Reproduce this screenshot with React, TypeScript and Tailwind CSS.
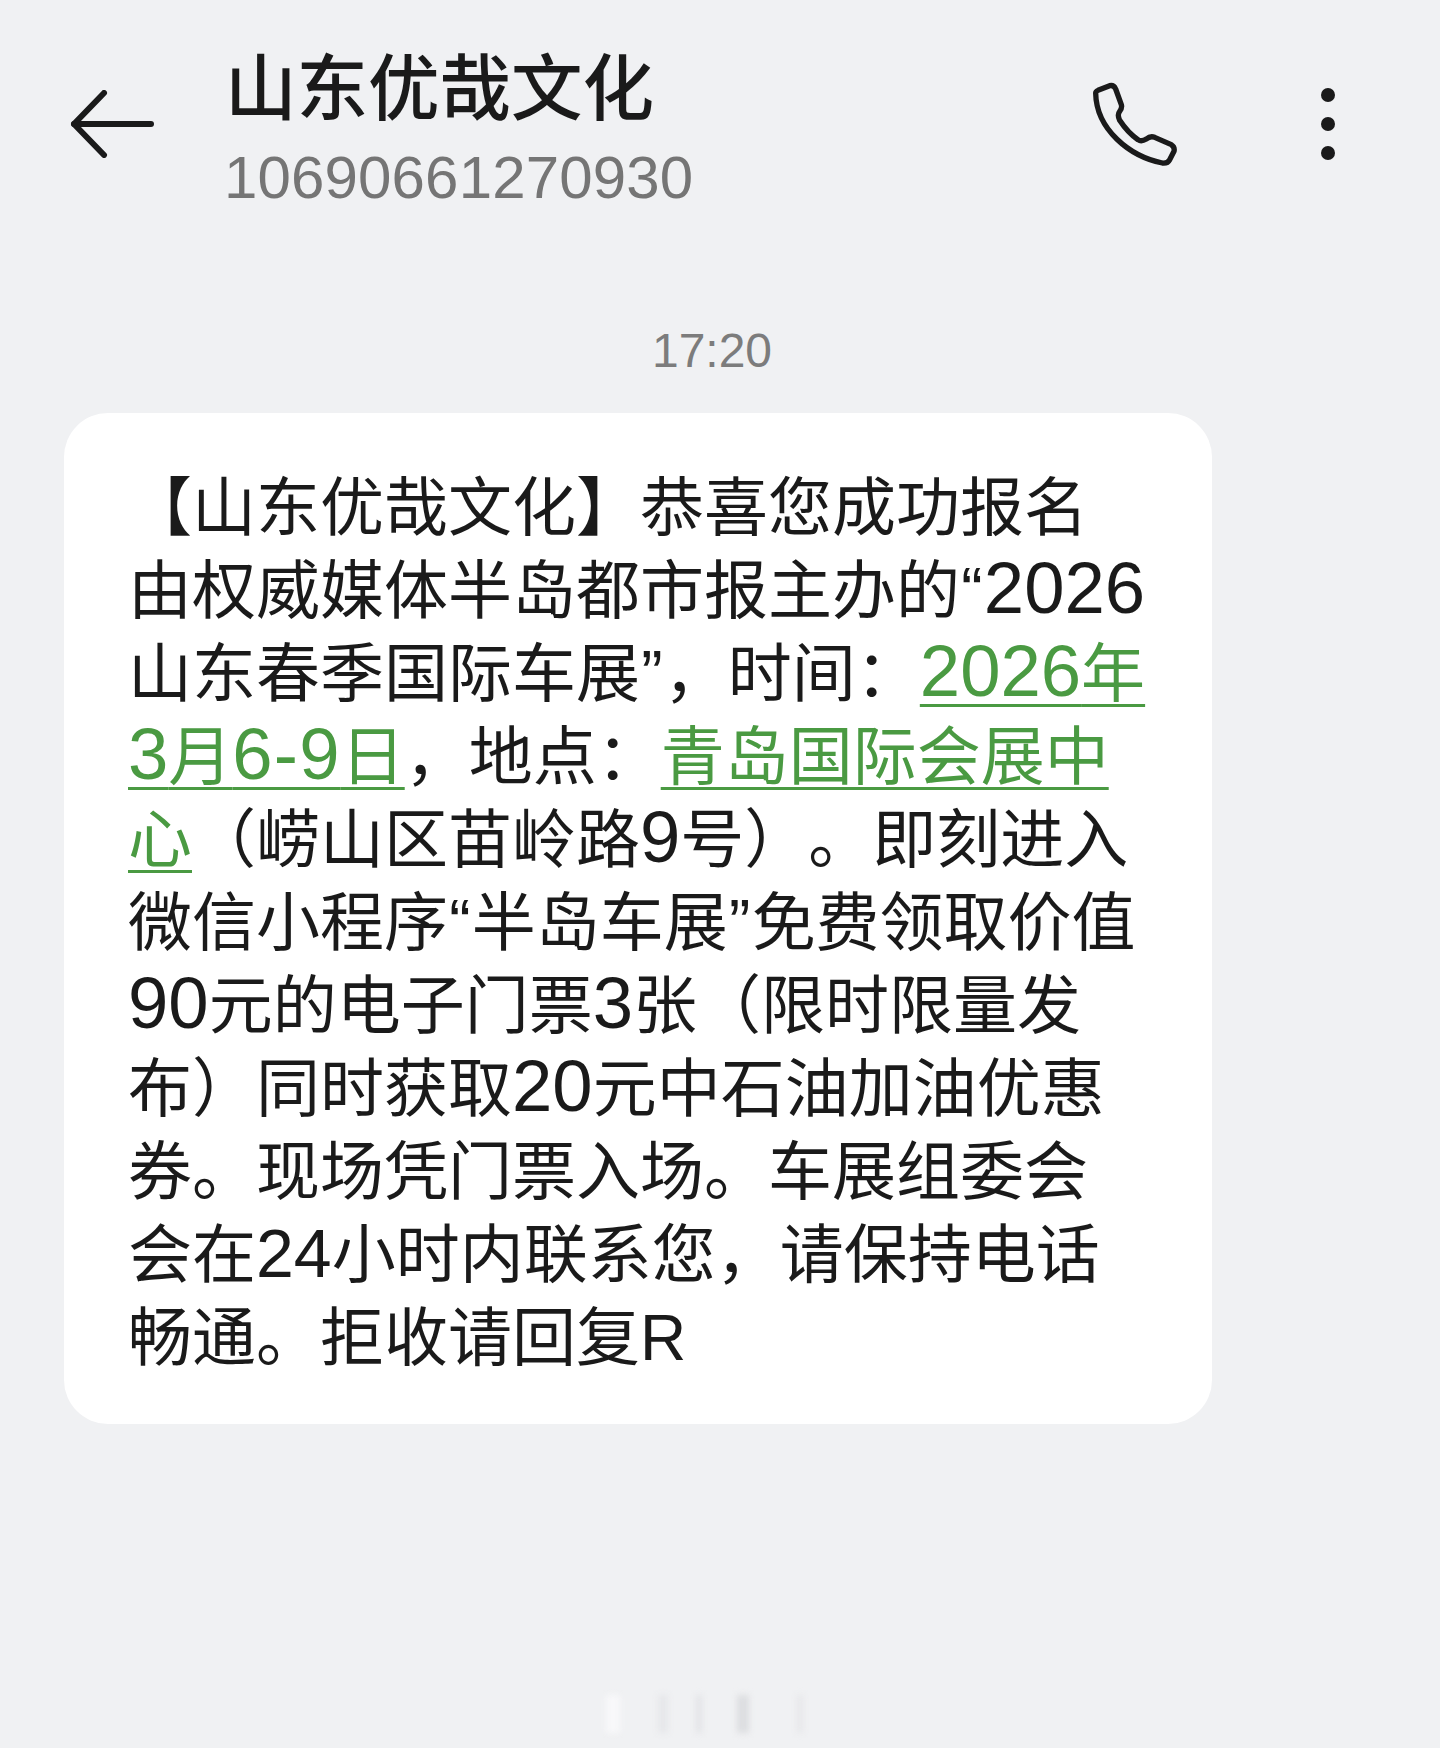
const Link = ({ children }: { children: React.ReactNode }) => (
    <span className="text-[#4a9a42] underline decoration-[3px] underline-offset-[8px]">{children}</span>
);

const Num = ({ children }: { children: React.ReactNode }) => (
    <span className="text-[72.5px] leading-none">{children}</span>
);

const Quote = ({ children }: { children: React.ReactNode }) => (
    <span className="mx-[1.25px]">{children}</span>
);

const App = () => {
    return (
        <div className="relative h-[1748px] w-[1440px] overflow-hidden bg-[#f0f1f3] font-['Liberation_Sans','Noto_Sans_CJK_SC',sans-serif] text-[#1a1a1a]">
            {/* header */}
            <div className="flex h-[220px] items-start pl-[70px] pr-[105px]">
                <svg className="mt-[90px] shrink-0" width="84" height="68" viewBox="0 0 84 68" fill="none" stroke="#1a1a1a" strokeWidth="6" strokeLinecap="round" strokeLinejoin="round">
                    <path d="M81 34H4" />
                    <path d="M34 3L4 34L34 65" />
                </svg>

                <div className="ml-[72px] flex-1">
                    <div className="ml-[-1px] mt-[46px] text-[71.5px] leading-[86px] font-medium">山东优哉文化</div>
                    <div className="ml-[-2px] mt-[11px] text-[60px] leading-[70px] tracking-[0.15px] text-[#757575]">10690661270930</div>
                </div>

                <svg className="ml-[2px] mt-[82px] shrink-0" width="86" height="86" viewBox="160 97 258 258" fill="none" stroke="#1a1a1a" strokeWidth="16" strokeLinecap="round" strokeLinejoin="round">
                    <path d="M175 122L210 108Q222 105 228 118L245 165Q248 175 240 185Q232 195 240 212Q265 250 295 270Q305 277 320 268Q332 258 345 263L395 285Q406 292 403 305L390 330Q384 342 368 340C270 320 170 240 168 130Q168 125 175 122Z" />
                </svg>

                <div className="ml-[142px] mt-[88px] flex shrink-0 flex-col gap-[15px]">
                    <div className="h-[14px] w-[14px] rounded-full bg-[#1a1a1a]" />
                    <div className="h-[14px] w-[14px] rounded-full bg-[#1a1a1a]" />
                    <div className="h-[14px] w-[14px] rounded-full bg-[#1a1a1a]" />
                </div>
            </div>

            {/* time */}
            <div className="ml-[-16px] mt-[103px] text-center text-[48px] leading-[56px] text-[#7c7c7c]">17:20</div>

            {/* message */}
            <div className="ml-[64px] mt-[34px] w-[1148px] rounded-[44px] bg-white pb-[44px] pl-[64px] pt-[54px] text-[64px] leading-[83px] whitespace-nowrap [text-spacing-trim:space-all]">
                <div>【山东优哉文化】恭喜您成功报名</div>
                <div>由权威媒体半岛都市报主办的<Quote>“</Quote><Num>2026</Num></div>
                <div>山东春季国际车展<Quote>”</Quote>，时间：<Link><Num>2026</Num>年</Link></div>
                <div><Link><Num>3</Num>月<span className="text-[72.5px] leading-none tracking-[1.2px]">6-9</span>日</Link>，地点：<Link>青岛国际会展中</Link></div>
                <div><Link>心</Link>（崂山区苗岭路<Num>9</Num>号）。即刻进入</div>
                <div>微信小程序<Quote>“</Quote>半岛车展<Quote>”</Quote>免费领取价值</div>
                <div><Num>90</Num>元的电子门票<Num>3</Num>张（限时限量发</div>
                <div>布）同时获取<Num>20</Num>元中石油加油优惠</div>
                <div>券。现场凭门票入场。车展组委会</div>
                <div>会在<span className="text-[68px] leading-none">24</span>小时内联系您，请保持电话</div>
                <div>畅通。拒收请回复R</div>
            </div>

            {/* blurred watermark */}
            <div className="absolute left-[600px] top-[1695px] flex h-[38px] w-[240px] items-stretch blur-[3px]">
                <div className="ml-[6px] w-[14px] bg-[#f8f8fa]" />
                <div className="ml-[38px] w-[10px] bg-[#e6e7ea]" />
                <div className="ml-[28px] w-[6px] bg-[#e2e3e6]" />
                <div className="ml-[35px] w-[12px] bg-[#dcdde0]" />
                <div className="ml-[48px] w-[6px] bg-[#e6e7ea]" />
            </div>
        </div>
    );
};

export default App;
